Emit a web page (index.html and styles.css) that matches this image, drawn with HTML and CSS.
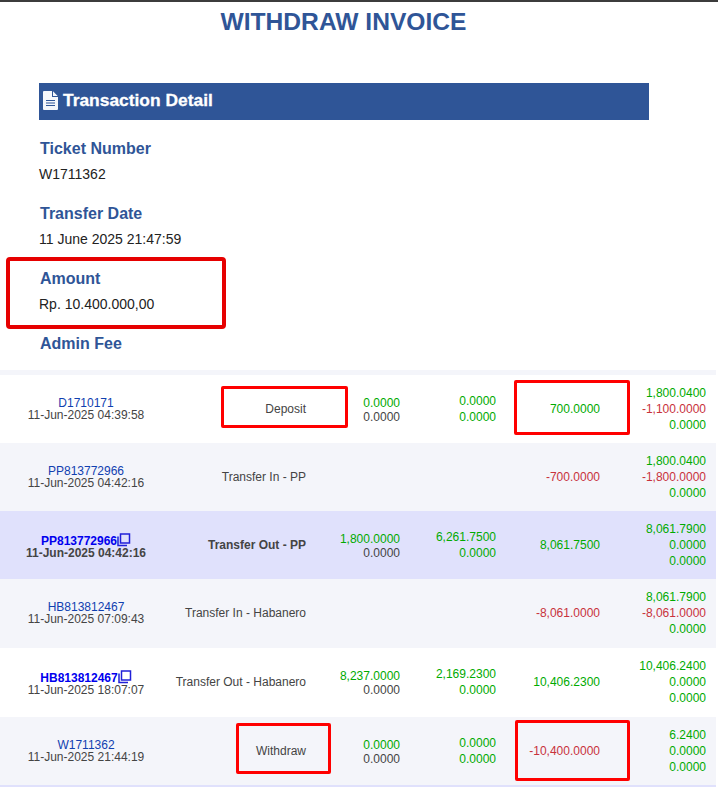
FILE: index.html
```html
<!DOCTYPE html>
<html lang="en">
<head>
<meta charset="utf-8">
<title>Withdraw Invoice</title>
<link rel="stylesheet" href="styles.css">
</head>
<body>
<div class="page">
  <h1 class="title">WITHDRAW INVOICE</h1>
  <section class="detail">
    <h2 class="detail-head">
      <svg class="doc-icon" viewBox="0 0 15 19" aria-hidden="true"><path fill-rule="evenodd" fill="#f4f6fb" d="M1 0H9V5.5Q9 6 9.5 6H15V18Q15 19 14 19H1Q0 19 0 18V1Q0 0 1 0ZM10 0.3L14.7 5H10ZM3 9V10H12V9ZM3 11.5V12.5H12V11.5ZM3 14V15H12V14Z"/></svg>
      Transaction Detail
    </h2>
    <div class="field"><h3 class="label">Ticket Number</h3><p class="value">W1711362</p></div>
    <div class="field"><h3 class="label">Transfer Date</h3><p class="value">11 June 2025 21:47:59</p></div>
    <div class="field"><h3 class="label">Amount</h3><p class="value">Rp. 10.400.000,00</p></div>
    <div class="field"><h3 class="label">Admin Fee</h3></div>
  </section>

  <div class="ledger">
    <div class="row white">
      <div class="ref"><span class="id">D1710171</span><span class="date">11-Jun-2025 04:39:58</span></div>
      <div class="type">Deposit</div>
      <div class="num pair-tight"><span class="pos">0.0000</span><span>0.0000</span></div>
      <div class="num pair"><span class="pos">0.0000</span><span class="pos">0.0000</span></div>
      <div class="num"><span class="pos">700.0000</span></div>
      <div class="num"><span class="pos">1,800.0400</span><span class="neg">-1,100.0000</span><span class="pos">0.0000</span></div>
    </div>
    <div class="row grey">
      <div class="ref"><span class="id">PP813772966</span><span class="date">11-Jun-2025 04:42:16</span></div>
      <div class="type">Transfer In - PP</div>
      <div class="num"></div>
      <div class="num"></div>
      <div class="num"><span class="neg">-700.0000</span></div>
      <div class="num"><span class="pos">1,800.0400</span><span class="neg">-1,800.0000</span><span class="pos">0.0000</span></div>
    </div>
    <div class="row lilac">
      <div class="ref ref-linked strong"><span class="id linked">PP813772966<svg class="copy" viewBox="0 0 14 14" aria-hidden="true"><path d="M3.5 1H12.5V10H3.5ZM1 3.5V12.5H10" fill="none" stroke="#2020d8" stroke-width="1.5"/></svg></span><span class="date">11-Jun-2025 04:42:16</span></div>
      <div class="type strong">Transfer Out - PP</div>
      <div class="num pair-tight"><span class="pos">1,800.0000</span><span>0.0000</span></div>
      <div class="num pair"><span class="pos">6,261.7500</span><span class="pos">0.0000</span></div>
      <div class="num"><span class="pos">8,061.7500</span></div>
      <div class="num"><span class="pos">8,061.7900</span><span class="pos">0.0000</span><span class="pos">0.0000</span></div>
    </div>
    <div class="row grey tall">
      <div class="ref"><span class="id">HB813812467</span><span class="date">11-Jun-2025 07:09:43</span></div>
      <div class="type">Transfer In - Habanero</div>
      <div class="num"></div>
      <div class="num"></div>
      <div class="num"><span class="neg">-8,061.0000</span></div>
      <div class="num"><span class="pos">8,061.7900</span><span class="neg">-8,061.0000</span><span class="pos">0.0000</span></div>
    </div>
    <div class="row white tall">
      <div class="ref ref-linked"><span class="id linked strong">HB813812467<svg class="copy" viewBox="0 0 14 14" aria-hidden="true"><path d="M3.5 1H12.5V10H3.5ZM1 3.5V12.5H10" fill="none" stroke="#2020d8" stroke-width="1.5"/></svg></span><span class="date">11-Jun-2025 18:07:07</span></div>
      <div class="type">Transfer Out - Habanero</div>
      <div class="num pair-tight"><span class="pos">8,237.0000</span><span>0.0000</span></div>
      <div class="num pair"><span class="pos">2,169.2300</span><span class="pos">0.0000</span></div>
      <div class="num"><span class="pos">10,406.2300</span></div>
      <div class="num"><span class="pos">10,406.2400</span><span class="pos">0.0000</span><span class="pos">0.0000</span></div>
    </div>
    <div class="row grey">
      <div class="ref"><span class="id">W1711362</span><span class="date">11-Jun-2025 21:44:19</span></div>
      <div class="type">Withdraw</div>
      <div class="num pair-tight"><span class="pos">0.0000</span><span>0.0000</span></div>
      <div class="num pair"><span class="pos">0.0000</span><span class="pos">0.0000</span></div>
      <div class="num"><span class="neg">-10,400.0000</span></div>
      <div class="num"><span class="pos">6.2400</span><span class="pos">0.0000</span><span class="pos">0.0000</span></div>
    </div>
    <div class="row-next"></div>
  </div>

  <div class="mark mark-amount"></div>
  <div class="mark mark-deposit"></div>
  <div class="mark mark-700"></div>
  <div class="mark mark-withdraw"></div>
  <div class="mark mark-10400"></div>
</div>
</body>
</html>
```
FILE: styles.css
```css
* { box-sizing: border-box; }
html, body { margin: 0; height: 787px; overflow: hidden; background: #fff; }
body { font-family: "Liberation Sans", Arial, sans-serif; color: #222; }
.page { position: relative; height: 787px; border-top: 2px solid #3c3c3c; }
.title {
  margin: 0;
  height: 81px;
  padding: 5px 31px 0 0;
  text-align: center;
  font-size: 24.6px;
  line-height: 29px;
  font-weight: 700;
  color: #2f5597;
}
.detail { height: 287px; padding-left: 39px; }
.detail-head {
  display: flex;
  align-items: center;
  gap: 5px;
  width: 610px;
  height: 37px;
  margin: 0 0 19px;
  padding: 0 0 2px 4px;
  background: #2f5597;
  color: #fff;
  font-size: 17.4px;
  font-weight: 700;
  -webkit-text-stroke: 0.3px #fff;
}
.doc-icon { width: 15px; height: 19px; flex: none; }
.field { height: 65px; }
.label {
  margin: 0;
  padding-left: 1px;
  font-size: 16px;
  line-height: 20px;
  font-weight: 700;
  color: #2f5597;
}
.value { margin: 6px 0 0; font-size: 14px; line-height: 18px; color: #222; }

.ledger { width: 716px; height: 417px; background: #f4f5fa; padding-top: 5px; }
.row {
  display: grid;
  grid-template-columns: 172px 134px 94px 96px 104px 106px;
  align-items: center;
  height: 68px;
  padding-right: 10px;
  font-size: 12px;
  color: #444;
}
.row.tall { height: 69px; padding-bottom: 1px; }
.white { background: #fff; }
.grey { background: #f4f5fa; }
.lilac { background: #e0e1fc; }
.row-next { height: 2px; background: #e0e1fc; }
.ref { display: flex; flex-direction: column; align-items: center; line-height: 12px; }
.ref-linked { padding-top: 3px; }
.id { color: #1040b0; }
.linked { display: flex; align-items: flex-end; color: #0000ee; }
.copy { width: 14px; height: 14px; margin-top: -2px; flex: none; }
.strong { font-weight: 700; }
.type { text-align: right; }
.num { display: flex; flex-direction: column; align-items: flex-end; line-height: 16px; }
.pair-tight { line-height: 14px; padding-top: 1px; }
.pos { color: #00aa00; }
.neg { color: #c8323c; }

.mark { position: absolute; border: 3px solid #f00; border-radius: 2px; pointer-events: none; }
.mark-amount { left: 6px; top: 255px; width: 220px; height: 72px; border-width: 4px; border-color: #e60000; border-radius: 4px; }
.mark-deposit { left: 221px; top: 384px; width: 127px; height: 42px; }
.mark-700 { left: 514px; top: 378px; width: 116px; height: 55px; }
.mark-withdraw { left: 236px; top: 721px; width: 95px; height: 51px; }
.mark-10400 { left: 515px; top: 718px; width: 115px; height: 61px; }
```
